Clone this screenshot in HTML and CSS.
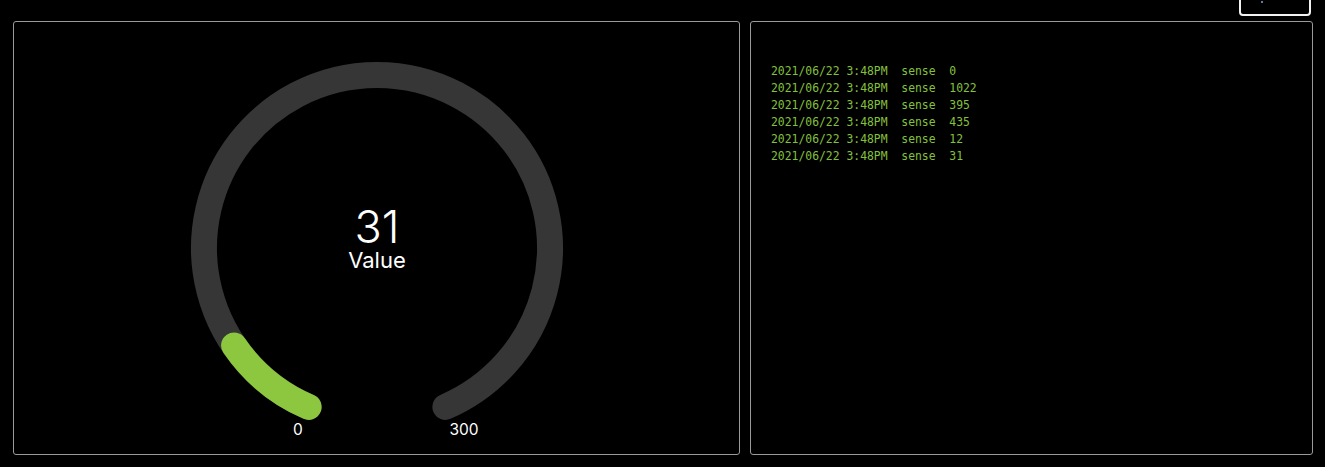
FILE: index.html
```html
<!DOCTYPE html>
<html lang="en">
<head>
<meta charset="utf-8">
<title>Dashboard</title>
<link rel="stylesheet" href="styles.css">
</head>
<body>
<header class="topbar">
  <button class="top-btn" type="button" aria-label="Menu"><span class="btn-dot"></span></button>
</header>
<main class="panels">
  <section class="panel gauge-panel">
    <svg class="gauge" width="400" height="400" viewBox="0 0 400 400">
      <path class="track" d="M 131.6 358.9 A 173 173 0 1 1 268.4 358.9"/>
      <path class="fill" d="M 131.6 358.9 A 173 173 0 0 1 57.1 297.5"/>
      <text class="g-value" x="200" y="195" text-anchor="middle">31</text>
      <text class="g-label" x="200" y="220" text-anchor="middle">Value</text>
      <text class="g-tick" x="121" y="387" text-anchor="middle">0</text>
      <text class="g-tick" x="287" y="387" text-anchor="middle">300</text>
    </svg>
  </section>
  <section class="panel log-panel">
    <pre class="log">2021/06/22 3:48PM  sense  0
2021/06/22 3:48PM  sense  1022
2021/06/22 3:48PM  sense  395
2021/06/22 3:48PM  sense  435
2021/06/22 3:48PM  sense  12
2021/06/22 3:48PM  sense  31</pre>
  </section>
</main>
</body>
</html>
```
FILE: styles.css
```css
html, body {
  margin: 0;
  padding: 0;
  background: #000;
  height: 100%;
  overflow: hidden;
}
body {
  font-family: "Inter", "Lato", sans-serif;
  color: #fff;
}
.topbar {
  height: 21px;
  display: flex;
  justify-content: flex-end;
  align-items: flex-end;
  padding-right: 14px;
  box-sizing: border-box;
  overflow: hidden;
}
.top-btn {
  width: 72px;
  height: 32px;
  margin-bottom: 5px;
  box-sizing: border-box;
  background: #000;
  border: 2px solid #f2f2f2;
  border-radius: 4px;
  padding: 0;
  display: flex;
  justify-content: center;
  align-items: flex-start;
}
.btn-dot {
  display: block;
  width: 2px;
  height: 2px;
  margin-top: 15px;
  margin-right: 26px;
  background: #8aa6c8;
  border-radius: 1px;
}
.panels {
  display: grid;
  grid-template-columns: 727px 563px;
  gap: 10px;
  padding: 0 12px 0 13px;
  height: 434px;
}
.panel {
  border: 1px solid #9a9a9a;
  border-radius: 3px;
  box-sizing: border-box;
  height: 434px;
  background: #000;
}
.gauge-panel {
  display: flex;
  justify-content: center;
  padding-top: 26px;
}
.gauge {
  display: block;
}
.track {
  fill: none;
  stroke: #363636;
  stroke-width: 26;
  stroke-linecap: round;
}
.fill {
  fill: none;
  stroke: #8dc63f;
  stroke-width: 26;
  stroke-linecap: round;
}
.g-value {
  fill: #fff;
  font-size: 45px;
  font-weight: 300;
}
.g-label {
  fill: #fff;
  font-size: 22px;
  font-weight: 400;
}
.g-tick {
  fill: #fff;
  font-size: 15.5px;
}
.log-panel {
  padding: 41px 20px 0 20px;
}
.log {
  margin: 0;
  font-family: "DejaVu Sans Mono", "Liberation Mono", monospace;
  font-size: 11.4px;
  line-height: 17px;
  color: #84c03c;
}
```
